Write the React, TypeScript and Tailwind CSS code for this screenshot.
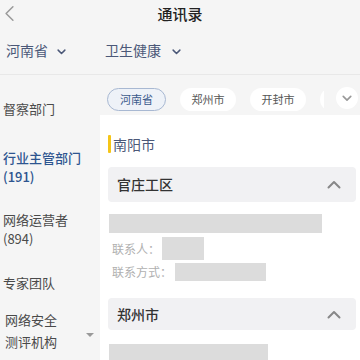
import React from "react";

const font = { fontFamily: '"Noto Sans CJK SC", "Noto Sans", sans-serif' };

function ChevronDown({ className }: { className?: string }) {
  return (
    <svg viewBox="0 0 12 8" className={className} fill="none" stroke="currentColor" strokeWidth="2" strokeLinecap="round" strokeLinejoin="round">
      <path d="M1.5 1.5 L6 6 L10.5 1.5" />
    </svg>
  );
}

function ChevronUp({ className }: { className?: string }) {
  return (
    <svg viewBox="0 0 14 9" className={className} fill="none" stroke="currentColor" strokeWidth="2" strokeLinecap="round" strokeLinejoin="round">
      <path d="M1.5 7.5 L7 2 L12.5 7.5" />
    </svg>
  );
}

export default function App() {
  return (
    <div className="w-[360px] h-[360px] overflow-hidden bg-[#f5f5f5] flex flex-col" style={font}>
      {/* header */}
      <div className="h-[27px] shrink-0 relative flex items-center justify-center">
        <svg viewBox="0 0 12 20" className="absolute left-[4px] top-[5px] w-[11px] h-[17px] text-[#9a9a9a]" fill="none" stroke="currentColor" strokeWidth="1.8" strokeLinecap="round" strokeLinejoin="round">
          <path d="M10 2 L2 10 L10 18" />
        </svg>
        <span className="text-[15px] font-medium text-[#222] leading-none">通讯录</span>
      </div>
      {/* filter row */}
      <div className="h-[48px] shrink-0 flex items-center border-b border-[#e8e8e8] text-[14px] text-[#4b5878]">
        <div className="flex items-center ml-[6px]">
          <span>河南省</span>
          <ChevronDown className="w-[9px] h-[6px] ml-[9px] mt-[2px]" />
        </div>
        <div className="flex items-center ml-[39px]">
          <span>卫生健康</span>
          <ChevronDown className="w-[9px] h-[6px] ml-[11px] mt-[2px]" />
        </div>
      </div>
      {/* main */}
      <div className="flex flex-1 min-h-0">
        {/* sidebar */}
        <div className="w-[100px] shrink-0 text-[13px] text-[#4a4a4a] pl-[3px] relative">
          <div className="mt-[24px] leading-[19px]">督察部门</div>
          <div className="mt-[30px] leading-[19px] text-[#2e5590] font-medium">
            行业主管部门
            <br />
            (191)
          </div>
          <div className="mt-[24px] leading-[19px]">
            网络运营者
            <br />
            (894)
          </div>
          <div className="mt-[25px] leading-[19px]">专家团队</div>
          <div className="mt-[17px] leading-[22px] pl-[2px]">
            网络安全
            <br />
            测评机构
          </div>
          <div className="absolute left-[86px] top-[258px] w-0 h-0 border-l-[4px] border-r-[4px] border-t-[4px] border-l-transparent border-r-transparent border-t-[#999]" />
        </div>
        {/* right */}
        <div className="flex-1 flex flex-col min-w-0">
          <div className="h-[40px] shrink-0 relative overflow-hidden">
            <div className="flex items-center gap-[14px] pl-[7px] pt-[13px] text-[11px] whitespace-nowrap">
              <div className="shrink-0 h-[23px] w-[59px] rounded-full border border-[#a8b8d2] bg-[#eef2f8] text-[#3b5a8c] flex items-center justify-center">河南省</div>
              <div className="shrink-0 h-[23px] w-[56px] rounded-full bg-white text-[#555] flex items-center justify-center">郑州市</div>
              <div className="shrink-0 h-[23px] w-[56px] rounded-full bg-white text-[#555] flex items-center justify-center">开封市</div>
              <div className="shrink-0 h-[23px] w-[56px] rounded-full bg-white" />
            </div>
            <div className="absolute right-0 top-0 h-full w-[36px] bg-[#f5f5f5] flex items-center justify-end pr-[2px]">
              <div className="w-[22px] h-[22px] rounded-full bg-white flex items-center justify-center mt-[6px] text-[#999]">
                <ChevronDown className="w-[10px] h-[7px]" />
              </div>
            </div>
          </div>
          <div className="flex-1 bg-white pl-[8px] pr-[4px] pt-[20px]">
            <div className="flex items-center h-[18px]">
              <div className="w-[3px] h-[18px] bg-[#f5c518] rounded-[1px]" />
              <span className="ml-[2px] text-[14px] text-[#4b5878]">南阳市</span>
            </div>
            <div className="mt-[14px] h-[35px] rounded-[4px] bg-[#f1f1f3] flex items-center justify-between pl-[9px] pr-[15px]">
              <span className="text-[14px] text-[#333] font-medium">官庄工区</span>
              <ChevronUp className="w-[14px] h-[9px] text-[#888]" />
            </div>
            <div className="mt-[12px] ml-[1px] w-[213px] h-[19px] bg-[#dcdcdc]" />
            <div className="mt-[4px] flex items-center text-[12px] text-[#b0b0b0] h-[23px] ml-[4px]">
              <span>联系人：</span>
              <div className="ml-[2px] w-[42px] h-[23px] bg-[#dcdcdc]" />
            </div>
            <div className="mt-[3px] flex items-center text-[12px] text-[#b0b0b0] h-[18px] ml-[4px]">
              <span>联系方式：</span>
              <div className="ml-[3px] w-[91px] h-[18px] bg-[#dcdcdc]" />
            </div>
            <div className="mt-[17px] h-[32px] rounded-[4px] bg-[#f1f1f3] flex items-center justify-between pl-[9px] pr-[15px]">
              <span className="text-[14px] text-[#333] font-medium">郑州市</span>
              <ChevronUp className="w-[14px] h-[9px] text-[#888]" />
            </div>
            <div className="mt-[14px] ml-[1px] w-[159px] h-[20px] bg-[#dcdcdc]" />
          </div>
        </div>
      </div>
    </div>
  );
}
